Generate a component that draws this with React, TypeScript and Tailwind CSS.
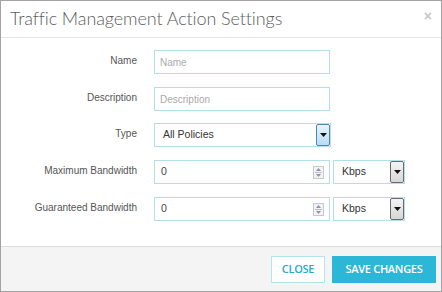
import React from "react";

const labelCls =
  "w-[136px] shrink-0 text-right text-[10px] leading-[13px] pt-[4px] text-[#555] [font-family:'Liberation_Sans',Arial,sans-serif]";
const inputCls =
  "h-[24px] border border-[#b3e0e8] bg-white px-[5px] text-[10px] text-[#444] outline-none placeholder:text-[#aaa] [font-family:'Liberation_Sans',Arial,sans-serif]";

function ArrowBtn({ blue }: { blue?: boolean }) {
  return (
    <div
      className={
        blue
          ? "w-[14px] h-[22px] border border-[#4f87b3] rounded-[2px] bg-gradient-to-b from-[#e8f4fc] to-[#b8dcf3] flex items-center justify-center"
          : "w-[14px] h-[22px] border border-[#6b6b6b] rounded-[2px] bg-gradient-to-b from-[#f4f4f4] to-[#d6d6d6] flex items-center justify-center"
      }
    >
      <svg width="7" height="4" viewBox="0 0 7 4">
        <path d="M0 0h7L3.5 4z" fill="#111" />
      </svg>
    </div>
  );
}

function Spinner() {
  return (
    <div className="w-[11px] h-[13px] border border-[#c9c9c9] bg-[#f3f3f3] flex flex-col items-center justify-center gap-[1px]">
      <svg width="5" height="3" viewBox="0 0 5 3">
        <path d="M0 3L2.5 0L5 3z" fill="#8a93a8" />
      </svg>
      <div className="w-[7px] h-px bg-[#bdbdbd]" />
      <svg width="5" height="3" viewBox="0 0 5 3">
        <path d="M0 0h5L2.5 3z" fill="#8a93a8" />
      </svg>
    </div>
  );
}

function Select({ value, width, blue }: { value: string; width: string; blue?: boolean }) {
  return (
    <div className={`${width} h-[24px] border border-[#b3e0e8] bg-white flex items-center justify-between pl-[8px] pr-0`}>
      <span className="text-[10.5px] text-[#333] [font-family:'Liberation_Sans',Arial,sans-serif]">{value}</span>
      <ArrowBtn blue={blue} />
    </div>
  );
}

function NumInput() {
  return (
    <div className="w-[176px] h-[24px] border border-[#b3e0e8] bg-white flex items-center justify-between pl-[6px] pr-[5px]">
      <span className="text-[10.5px] text-[#444] [font-family:'Liberation_Sans',Arial,sans-serif]">0</span>
      <Spinner />
    </div>
  );
}

export default function App() {
  return (
    <div className="w-[442px] h-[292px] border border-[#a3a3a3] bg-white flex flex-col overflow-hidden">
      <div className="h-[37px] shrink-0 border-b border-[#e5e5e5] flex items-center justify-between pl-[9px] pr-[9px]">
        <span className="text-[18px] text-[#5c5c5c] tracking-[-0.1px] [font-family:Lato,'Open_Sans',sans-serif] font-light mt-[-1px]">
          Traffic Management Action Settings
        </span>
        <span className="text-[14px] font-bold text-[#c8c8c8] leading-none mt-[-6px] [font-family:'Liberation_Sans',Arial,sans-serif]">×</span>
      </div>
      <div className="flex-1 flex flex-col pt-[12px]">
        <div className="flex">
          <div className={labelCls}>Name</div>
          <input className={`${inputCls} ml-[17px] w-[176px]`} placeholder="Name" />
        </div>
        <div className="flex mt-[13px]">
          <div className={labelCls}>Description</div>
          <input className={`${inputCls} ml-[17px] w-[176px]`} placeholder="Description" />
        </div>
        <div className="flex mt-[12px]">
          <div className={labelCls}>Type</div>
          <div className="ml-[17px]">
            <Select value="All Policies" width="w-[177px]" blue />
          </div>
        </div>
        <div className="flex mt-[13px]">
          <div className={labelCls}>Maximum Bandwidth</div>
          <div className="ml-[17px] flex gap-[3px]">
            <NumInput />
            <Select value="Kbps" width="w-[72px]" />
          </div>
        </div>
        <div className="flex mt-[13px]">
          <div className={labelCls}>Guaranteed Bandwidth</div>
          <div className="ml-[17px] flex gap-[3px]">
            <NumInput />
            <Select value="Kbps" width="w-[72px]" />
          </div>
        </div>
      </div>
      <div className="h-[45px] shrink-0 border-t border-[#dcdcdc] bg-[#f4f4f4] flex items-center justify-end gap-[7px] pr-[5px]">
        <button className="h-[27px] w-[54px] border border-[#b6e2ec] bg-white text-[11px] font-semibold text-[#2aa9c6] [font-family:'Open_Sans',sans-serif] tracking-[-0.3px]">
          CLOSE
        </button>
        <button className="h-[27px] w-[104px] bg-[#2cb7d6] text-[11px] font-semibold text-white [font-family:'Open_Sans',sans-serif] tracking-[-0.3px]">
          SAVE CHANGES
        </button>
      </div>
    </div>
  );
}
